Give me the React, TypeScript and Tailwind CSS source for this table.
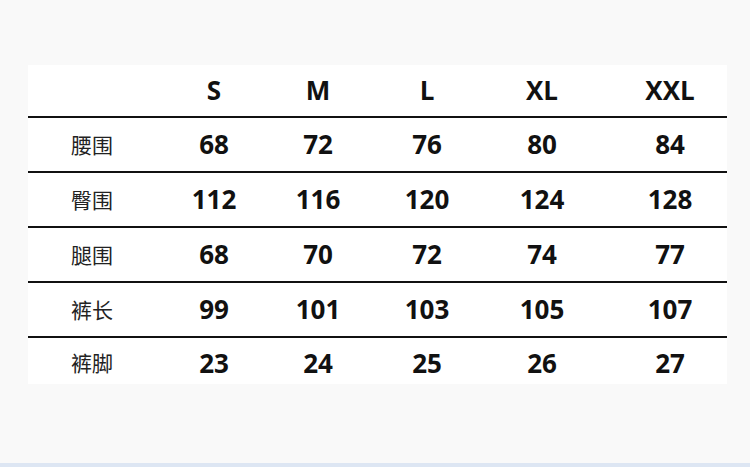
const sizes = ["S", "M", "L", "XL", "XXL"];

const rows: { label: string; values: string[] }[] = [
  { label: "腰围", values: ["68", "72", "76", "80", "84"] },
  { label: "臀围", values: ["112", "116", "120", "124", "128"] },
  { label: "腿围", values: ["68", "70", "72", "74", "77"] },
  { label: "裤长", values: ["99", "101", "103", "105", "107"] },
  { label: "裤脚", values: ["23", "24", "25", "26", "27"] },
];

const grid = "grid grid-cols-[128px_116px_92px_126px_104px_152px] items-center";
const num = "text-center text-[26px] font-bold text-[#111]";

export default function App() {
  return (
    <div
      className="flex h-[467px] w-[750px] flex-col bg-[#f9f9f9]"
      style={{ fontFamily: '"Open Sans", "Noto Sans CJK SC", sans-serif' }}
    >
      <div className="ml-[28px] mt-[65px] w-[699px] bg-white">
        <div className={`${grid} h-[53px] border-b-2 border-[#111]`}>
          <div />
          {sizes.map((s) => (
            <div key={s} className={num}>
              {s}
            </div>
          ))}
        </div>
        {rows.map((r, i) => (
          <div
            key={r.label}
            className={`${grid} ${
              i < rows.length - 1 ? "h-[55px] border-b-2 border-[#111]" : "h-[46px] pt-1"
            }`}
          >
            <div
              className="text-center text-[21px] text-[#222]"
              style={{ fontFamily: '"Noto Sans CJK SC", sans-serif' }}
            >
              {r.label}
            </div>
            {r.values.map((v, j) => (
              <div key={j} className={num}>
                {v}
              </div>
            ))}
          </div>
        ))}
      </div>
      <div className="flex-1" />
      <div className="h-[4px] bg-[#dde6f3]" />
    </div>
  );
}
